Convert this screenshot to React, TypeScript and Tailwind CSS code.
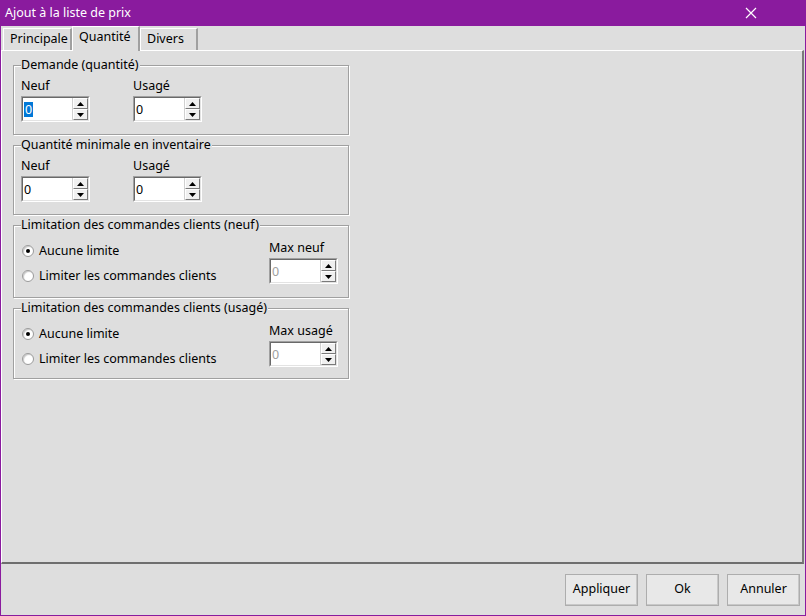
import React from 'react';

const font = { fontFamily: '"Noto Sans", "Open Sans", sans-serif' };

function Spinner({ selected, disabled }: { selected?: boolean; disabled?: boolean }) {
  return (
    <div className="flex h-[26px] w-[69px] border border-t-[#a0a0a0] border-l-[#a0a0a0] border-b-white border-r-white">
      <div className="flex flex-1 border border-t-[#696969] border-l-[#696969] border-b-[#e3e3e3] border-r-[#e3e3e3] bg-white">
        <div className="flex flex-1 items-center pl-[1px]">
          {selected ? (
            <span className="bg-[#0078d7] px-[1px] text-[12.5px] leading-[15px] text-white">0</span>
          ) : (
            <span className={`text-[12.5px] leading-[15px] ${disabled ? 'text-[#a0a0a0]' : 'text-black'}`}>0</span>
          )}
        </div>
        <div className="flex w-[16px] flex-col border-l border-[#d0d0d0]">
          <SpinButton up />
          <SpinButton />
        </div>
      </div>
    </div>
  );
}

function SpinButton({ up }: { up?: boolean }) {
  return (
    <div className="flex flex-1 items-center justify-center border border-t-white border-l-white border-b-[#7a7a7a] border-r-[#7a7a7a] bg-[#f0f0f0]">
      <svg width="7" height="4" viewBox="0 0 7 4">
        {up ? <path d="M3.5 0 L7 4 L0 4 Z" fill="#000" /> : <path d="M0 0 L7 0 L3.5 4 Z" fill="#000" />}
      </svg>
    </div>
  );
}

function Radio({ checked, label }: { checked?: boolean; label: string }) {
  return (
    <div className="flex items-center gap-[5px]">
      <div className="flex h-[12px] w-[12px] items-center justify-center rounded-full border border-[#9a9a9a] bg-white shadow-[inset_1px_1px_1px_#c8c8c8]">
        {checked && <div className="h-[4px] w-[4px] rounded-full bg-black" />}
      </div>
      <span className="text-[12.5px] text-black">{label}</span>
    </div>
  );
}

function Group({ title, height, children }: { title: string; height: string; children: React.ReactNode }) {
  return (
    <div className={`relative w-[336px] ${height} border border-[#a0a0a0] shadow-[inset_1px_1px_0_#fff,1px_1px_0_#fff]`}>
      <span className="absolute -top-[9px] left-[7px] bg-[#dedede] pr-[1px] text-[12.5px] leading-[16px] text-black">
        {title}
      </span>
      {children}
    </div>
  );
}

function PairGroup({ title, height }: { title: string; height: string }) {
  return (
    <Group title={title} height={height}>
      <div className="flex gap-[43px] pl-[7px] pt-[12px]">
        <div className="flex flex-col gap-[2px]">
          <span className="text-[12.5px] leading-[16px] text-black">Neuf</span>
          <Spinner selected={title.startsWith('Demande')} />
        </div>
        <div className="flex flex-col gap-[2px]">
          <span className="text-[12.5px] leading-[16px] text-black">Usagé</span>
          <Spinner />
        </div>
      </div>
    </Group>
  );
}

function LimitGroup({ title, maxLabel, height }: { title: string; maxLabel: string; height: string }) {
  return (
    <Group title={title} height={height}>
      <div className="flex justify-between pl-[8px] pr-[10px] pt-[10px]">
        <div className="flex flex-col gap-[6px] pt-[6px]">
          <Radio checked label="Aucune limite" />
          <Radio label="Limiter les commandes clients" />
        </div>
        <div className="flex flex-col gap-[2px] pt-[4px]">
          <span className="text-[12.5px] leading-[16px] text-black">{maxLabel}</span>
          <Spinner disabled />
        </div>
      </div>
    </Group>
  );
}

function Tab({ label, width, active }: { label: string; width: string; active?: boolean }) {
  return (
    <div
      className={`flex ${width} items-center border-l border-t border-l-white border-t-white border-r-2 border-r-[#a0a0a0] px-[6px] text-[12.5px] text-black ${
        active ? 'relative z-10 -mb-[1px] h-[25px] bg-[#dedede] pb-[3px]' : 'h-[22px] bg-[#dedede]'
      }`}
    >
      {label}
    </div>
  );
}

function Button({ label }: { label: string }) {
  return (
    <button className="flex h-[32px] w-[73px] items-center justify-center border border-[#adadad] bg-[#e8e8e8] text-[12.5px] text-black shadow-[inset_-1px_-1px_0_#c8c8c8]">
      {label}
    </button>
  );
}

export default function App() {
  return (
    <div className="flex h-[616px] w-[806px] flex-col bg-[#8a1b9e] px-[1px] pb-[1px]" style={font}>
      {/* title bar */}
      <div className="flex h-[26px] items-center justify-between pl-[4px] pr-[48px]">
        <span className="text-[12.5px] text-white">Ajout à la liste de prix</span>
        <svg width="12" height="12" viewBox="0 0 12 12">
          <path d="M1 1 L11 11 M11 1 L1 11" stroke="#fff" strokeWidth="1.2" />
        </svg>
      </div>

      <div className="flex flex-1 flex-col bg-[#dedede]">
        {/* tabs */}
        <div className="flex h-[24px] items-end pl-[2px]">
          <Tab label="Principale" width="w-[69px]" />
          <Tab label="Quantité" width="w-[68px]" active />
          <Tab label="Divers" width="w-[58px]" />
        </div>

        {/* tab page */}
        <div className="mr-[1px] flex h-[514px] flex-col gap-[10px] border-l border-t border-l-white border-t-white border-r-2 border-b-2 border-r-[#7a7a7a] border-b-[#6e6e6e] pl-[11px] pt-[14px]">
          <PairGroup title="Demande (quantité)" height="h-[70px]" />
          <PairGroup title="Quantité minimale en inventaire" height="h-[70px]" />
          <LimitGroup title="Limitation des commandes clients (neuf)" maxLabel="Max neuf" height="h-[73px]" />
          <LimitGroup title="Limitation des commandes clients (usagé)" maxLabel="Max usagé" height="h-[71px]" />
        </div>

        {/* footer */}
        <div className="flex flex-1 items-center justify-end gap-[8px] pr-[5px]">
          <Button label="Appliquer" />
          <Button label="Ok" />
          <Button label="Annuler" />
        </div>
      </div>
    </div>
  );
}
